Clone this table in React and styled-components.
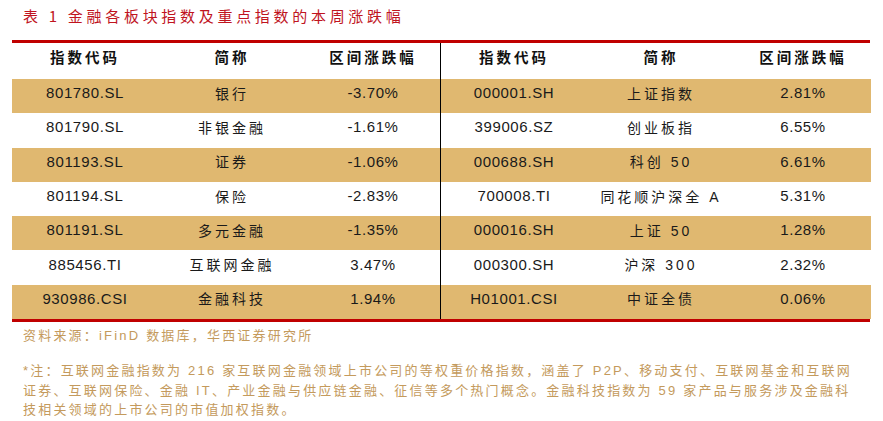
import React from 'react'
import styled, { createGlobalStyle } from 'styled-components'

const GlobalStyle = createGlobalStyle`
    html, body {
        margin: 0;
        padding: 0;
        background: #ffffff;
    }
    body {
        font-family: "Liberation Sans", "Noto Sans CJK SC", sans-serif;
        color: #1a1a1a;
    }
`

const Page = styled.div`
    width: 883px;
    height: 421px;
    padding: 6px 13px 0 12px;
    box-sizing: border-box;
    overflow: hidden;
`

const Title = styled.div`
    margin-left: 11px;
    height: 20px;
    line-height: 20px;
    font-family: "Noto Sans CJK SC", sans-serif;
    font-size: 15px;
    letter-spacing: 3.7px;
    color: #c0141e;
    white-space: nowrap;
`

const Table = styled.div`
    margin-top: 14px;
    display: flex;
    border-top: 3px solid #c00000;
    border-bottom: 3px solid #c00000;
`

const Half = styled.div`
    flex: ${props => props.$w} 0 ${props => props.$w}px;
    border-left: ${props => props.$divider ? '1px solid #000' : 'none'};
`

const Row = styled.div`
    display: grid;
    grid-template-columns: 146px 148px 1fr;
    align-items: center;
    height: ${props => props.$header ? '36px' : '34.3px'};
    padding-bottom: ${props => props.$header ? '10px' : '7px'};
    box-sizing: border-box;
    background: ${props => props.$striped ? '#e0b870' : 'transparent'};
`

const HeadCell = styled.div`
    text-align: center;
    font-family: "Noto Sans CJK SC", sans-serif;
    font-weight: 700;
    font-size: 14.5px;
    letter-spacing: 3px;
    color: #111;
    white-space: nowrap;
`

const Code = styled.div`
    text-align: center;
    font-size: 15px;
    letter-spacing: 0.6px;
    white-space: nowrap;
`

const Name = styled.div`
    text-align: center;
    font-family: "Liberation Sans", "Noto Sans CJK SC", sans-serif;
    font-size: 14px;
    letter-spacing: 3px;
    white-space: nowrap;
`

const Change = styled.div`
    text-align: center;
    font-size: 15px;
    letter-spacing: 0.6px;
    white-space: nowrap;
`

const Source = styled.div`
    margin: 4px 0 0 11px;
    font-family: "Liberation Sans", "Noto Sans CJK SC", sans-serif;
    font-size: 13px;
    line-height: 20px;
    letter-spacing: 2.2px;
    color: #c49a5c;
    white-space: nowrap;
`

const Note = styled.div`
    margin: 15px 0 0 11px;
    font-family: "Liberation Sans", "Noto Sans CJK SC", sans-serif;
    font-size: 13px;
    line-height: 19.5px;
    letter-spacing: 2.2px;
    color: #c49a5c;
    white-space: nowrap;
`

const sectors = [
    ['801780.SL', '银行', '-3.70%'],
    ['801790.SL', '非银金融', '-1.61%'],
    ['801193.SL', '证券', '-1.06%'],
    ['801194.SL', '保险', '-2.83%'],
    ['801191.SL', '多元金融', '-1.35%'],
    ['885456.TI', '互联网金融', '3.47%'],
    ['930986.CSI', '金融科技', '1.94%'],
]

const indices = [
    ['000001.SH', '上证指数', '2.81%'],
    ['399006.SZ', '创业板指', '6.55%'],
    ['000688.SH', '科创 50', '6.61%'],
    ['700008.TI', '同花顺沪深全 A', '5.31%'],
    ['000016.SH', '上证 50', '1.28%'],
    ['000300.SH', '沪深 300', '2.32%'],
    ['H01001.CSI', '中证全债', '0.06%'],
]

const HalfTable = ({ rows, width, divider }) => (
    <Half $w={width} $divider={divider}>
        <Row $header>
            <HeadCell>指数代码</HeadCell>
            <HeadCell>简称</HeadCell>
            <HeadCell>区间涨跌幅</HeadCell>
        </Row>
        {rows.map((r, i) => (
            <Row key={r[0]} $striped={i % 2 === 0}>
                <Code>{r[0]}</Code>
                <Name>{r[1]}</Name>
                <Change>{r[2]}</Change>
            </Row>
        ))}
    </Half>
)

export default function App() {
    return (
        <>
            <GlobalStyle />
            <Page>
                <Title>表 1 金融各板块指数及重点指数的本周涨跌幅</Title>
                <Table>
                    <HalfTable rows={sectors} width={428} />
                    <HalfTable rows={indices} width={430} divider />
                </Table>
                <Source>资料来源：iFinD 数据库，华西证券研究所</Source>
                <Note>
                    *注：互联网金融指数为 216 家互联网金融领域上市公司的等权重价格指数，涵盖了 P2P、移动支付、互联网基金和互联网<br />
                    证券、互联网保险、金融 IT、产业金融与供应链金融、征信等多个热门概念。金融科技指数为 59 家产品与服务涉及金融科<br />
                    技相关领域的上市公司的市值加权指数。
                </Note>
            </Page>
        </>
    )
}
